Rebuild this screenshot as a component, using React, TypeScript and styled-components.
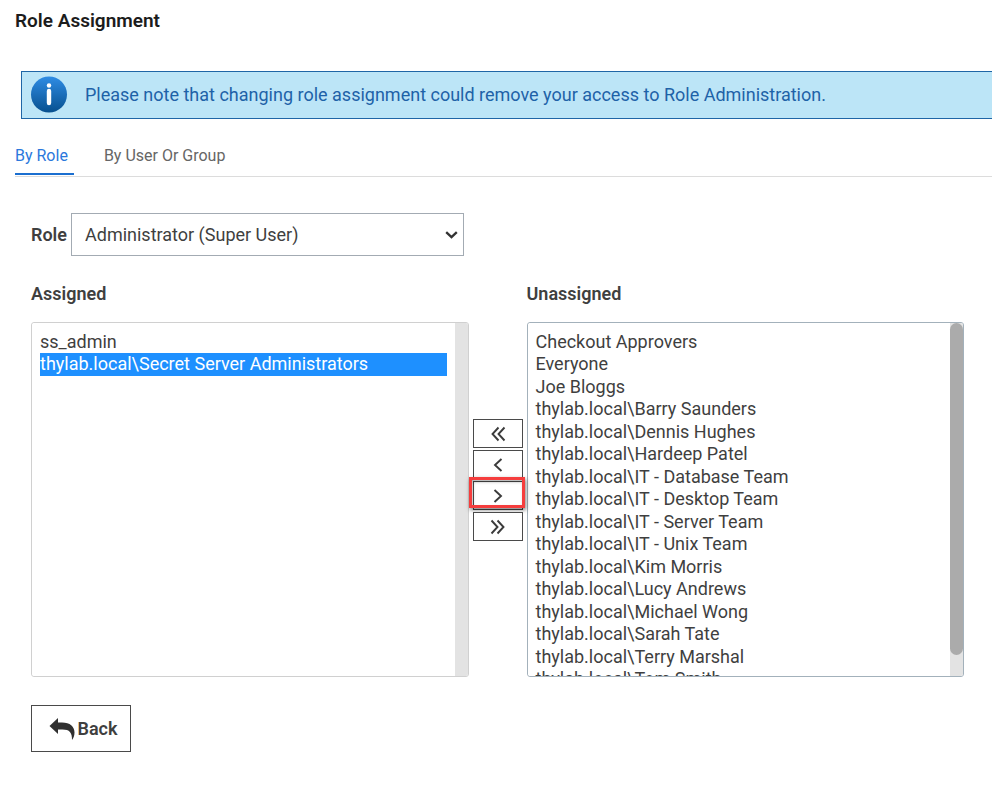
import React, { useState } from "react";
import styled, { createGlobalStyle } from "styled-components";

const GlobalStyle = createGlobalStyle`
  *, *::before, *::after { box-sizing: border-box; }
  body {
    margin: 0;
    background: #fff;
    color: #3f3f3f;
    font-family: Roboto, "Liberation Sans", sans-serif;
    font-size: 18px;
  }
  button, select { font: inherit; color: inherit; }
`;

const Page = styled.main`
  padding: 8px 0 44px;
`;

const Title = styled.h1`
  margin: 0 0 0 15px;
  font-size: 19px;
  font-weight: 600;
  line-height: 26px;
  color: #1c1c1c;
`;

const Notice = styled.div`
  display: flex;
  align-items: center;
  gap: 17px;
  min-height: 48px;
  margin: 37px 0 0 21px;
  padding-left: 8px;
  border: 1px solid #1f66a6;
  border-right: 0;
  background: #bce5f7;
  color: #1e62a8;
  line-height: 24px;
`;

const Tabs = styled.nav`
  display: flex;
  gap: 30px;
  margin: 24px 0 0 15px;
  border-bottom: 1px solid #dcdcdc;
`;

const Tab = styled.a<{ $active?: boolean }>`
  height: 32px;
  padding-right: 6px;
  margin-bottom: 1px;
  border-bottom: 2px solid ${(p) => (p.$active ? "#1b6fd0" : "transparent")};
  color: ${(p) => (p.$active ? "#2b78dc" : "#666")};
  font-size: 16px;
  line-height: 25px;
  text-decoration: none;
`;

const Content = styled.section`
  padding: 36px 28px 0 31px;
`;

const RoleRow = styled.div`
  display: flex;
  align-items: center;
  gap: 4px;
`;

const RoleLabel = styled.label`
  font-weight: 600;
`;

const SelectFrame = styled.div`
  position: relative;
  width: 393px;

  svg {
    position: absolute;
    right: 6px;
    top: 18px;
    pointer-events: none;
  }
`;

const RoleSelect = styled.select`
  appearance: none;
  display: block;
  width: 100%;
  height: 43px;
  padding: 0 24px 0 13px;
  border: 1px solid #a3abb3;
  border-radius: 0;
  background: #fff;
`;

const Transfer = styled.div`
  display: grid;
  grid-template-columns: minmax(0, 1fr) 50px minmax(0, 1fr);
  column-gap: 4px;
  margin-top: 26px;
`;

const Column = styled.div`
  display: flex;
  flex-direction: column;
  gap: 17px;
`;

const ListLabel = styled.label`
  font-weight: 600;
  line-height: 23px;
`;

const ListFrame = styled.div<{ $quiet?: boolean }>`
  display: flex;
  height: 355px;
  border: 1px solid ${(p) => (p.$quiet ? "#d0d0d0" : "#a3b1bb")};
  border-radius: 3px;
  overflow: hidden;
`;

const ListSelect = styled.select`
  flex: 1;
  min-width: 0;
  height: 100%;
  padding: 8px;
  border: 0;
  background: #fff;
  outline: 0;
  scrollbar-width: none;

  option { padding: 0; min-height: 22px; }
  option:nth-child(even) { min-height: 23px; }
  option:checked {
    background: #1e90ff linear-gradient(#1e90ff, #1e90ff);
    color: #fff;
  }
`;

const Track = styled.div`
  flex: 0 0 13px;
  background: #e3e3e3;
`;

const Thumb = styled.div`
  height: 94%;
  border-radius: 7px;
  background: #ababab;
`;

const Moves = styled.div`
  display: flex;
  flex-direction: column;
  gap: 2px;
  padding-top: 137px;
`;

const MoveButton = styled.button<{ $marked?: boolean }>`
  position: relative;
  display: flex;
  align-items: center;
  justify-content: center;
  height: 29px;
  padding: 0;
  border: 1px solid #4a4a4a;
  background: #fff;

  &::after {
    content: "";
    display: ${(p) => (p.$marked ? "block" : "none")};
    position: absolute;
    inset: -5px -3px 1px -5px;
    border: 3px solid #f53d3d;
    box-shadow: 1px 2px 4px rgba(0, 0, 0, 0.5), inset 1px 2px 3px rgba(0, 0, 0, 0.3);
  }
`;

const BackButton = styled.button`
  display: flex;
  align-items: center;
  justify-content: center;
  gap: 3px;
  width: 100px;
  height: 47px;
  margin-top: 28px;
  padding: 0 0 0 4px;
  border: 1px solid #4a4a4a;
  background: #fff;
  font-weight: 600;
`;

const InfoIcon = () => (
  <svg width="38" height="38" viewBox="0 0 38 38" aria-hidden="true">
    <defs>
      <linearGradient id="info" x1="0" y1="0" x2="0" y2="1">
        <stop offset="0" stopColor="#2f8ce4" />
        <stop offset="1" stopColor="#07508f" />
      </linearGradient>
    </defs>
    <circle cx="19" cy="18.5" r="18" fill="url(#info)" />
    <circle cx="19" cy="9.5" r="2.2" fill="#fff" />
    <path d="M19 15V27" stroke="#fff" strokeWidth="4.4" strokeLinecap="round" />
  </svg>
);

const Caret = () => (
  <svg width="13" height="8" viewBox="0 0 13 8" fill="none" stroke="#333" strokeWidth="2.3" aria-hidden="true">
    <path d="M1.200 1.200 6.500 6.200 11.800 1.200" />
  </svg>
);

const Chevrons = ({ d }: { d: string }) => (
  <svg width="18" height="16" viewBox="0 0 18 16" fill="none" stroke="#3b3b3b" strokeWidth="1.9" aria-hidden="true">
    <path d={d} />
  </svg>
);

const BackArrow = () => (
  <svg width="26" height="22" viewBox="0 0 26 22" fill="#303030" aria-hidden="true">
    <path d="M0.5 8 9 0V4.5H13C21 4.5 25.500 8.500 25.500 14.500C25.500 17.500 24.500 20 23 22C23.200 14.500 20.500 11.500 13.500 11.500H9V16Z" />
  </svg>
);

const assigned = ["ss_admin", "thylab.local\\Secret Server Administrators"];

const unassigned = [
  "Checkout Approvers",
  "Everyone",
  "Joe Bloggs",
  "thylab.local\\Barry Saunders",
  "thylab.local\\Dennis Hughes",
  "thylab.local\\Hardeep Patel",
  "thylab.local\\IT - Database Team",
  "thylab.local\\IT - Desktop Team",
  "thylab.local\\IT - Server Team",
  "thylab.local\\IT - Unix Team",
  "thylab.local\\Kim Morris",
  "thylab.local\\Lucy Andrews",
  "thylab.local\\Michael Wong",
  "thylab.local\\Sarah Tate",
  "thylab.local\\Terry Marshal",
  "thylab.local\\Tom Smith",
];

const moves = [
  { label: "Assign all", d: "M9.500 1.500 3.500 8 9.500 14.500M15.500 1.500 9.500 8 15.500 14.500" },
  { label: "Assign", d: "M12.500 2 6 8 12.500 14" },
  { label: "Unassign", d: "M5.500 2 12 8 5.500 14", marked: true },
  { label: "Unassign all", d: "M2.500 1.500 8.500 8 2.500 14.500M8.500 1.500 14.500 8 8.500 14.500" },
];

type ListBoxProps = {
  id: string;
  names: string[];
  initial?: string[];
  quiet?: boolean;
};

function ListBox({ id, names, initial = [], quiet }: ListBoxProps) {
  const [selected, setSelected] = useState(initial);
  const [scrollTop, setScrollTop] = useState(0);

  return (
    <ListFrame $quiet={quiet}>
      <ListSelect
        id={id}
        multiple
        value={selected}
        onChange={(e) => setSelected(Array.from(e.target.selectedOptions, (o) => o.value))}
        onScroll={(e) => setScrollTop(e.currentTarget.scrollTop)}
      >
        {names.map((name) => <option key={name} value={name}>{name}</option>)}
      </ListSelect>
      <Track>
        {!quiet && <Thumb style={{ transform: `translateY(${scrollTop}px)` }} />}
      </Track>
    </ListFrame>
  );
}

export default function App() {
  return (
    <>
      <GlobalStyle />
      <Page>
        <Title>Role Assignment</Title>
        <Notice role="note">
          <InfoIcon />
          <span>Please note that changing role assignment could remove your access to Role Administration.</span>
        </Notice>
        <Tabs>
          <Tab href="#role" $active aria-current="page">By Role</Tab>
          <Tab href="#user">By User Or Group</Tab>
        </Tabs>
        <Content>
          <RoleRow>
            <RoleLabel htmlFor="role">Role</RoleLabel>
            <SelectFrame>
              <RoleSelect id="role">
                <option>Administrator (Super User)</option>
              </RoleSelect>
              <Caret />
            </SelectFrame>
          </RoleRow>
          <Transfer>
            <Column>
              <ListLabel htmlFor="assigned">Assigned</ListLabel>
              <ListBox id="assigned" names={assigned} initial={[assigned[1]]} quiet />
            </Column>
            <Moves>
              {moves.map((m) => (
                <MoveButton key={m.label} type="button" aria-label={m.label} $marked={m.marked}>
                  <Chevrons d={m.d} />
                </MoveButton>
              ))}
            </Moves>
            <Column>
              <ListLabel htmlFor="unassigned">Unassigned</ListLabel>
              <ListBox id="unassigned" names={unassigned} />
            </Column>
          </Transfer>
          <BackButton type="button">
            <BackArrow />
            Back
          </BackButton>
        </Content>
      </Page>
    </>
  );
}
